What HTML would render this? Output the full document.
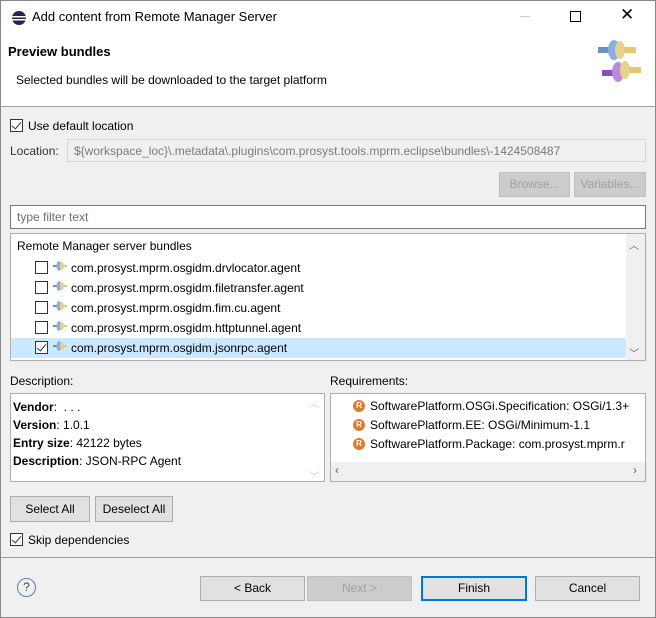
<!DOCTYPE html>
<html><head><meta charset="utf-8"><style>
*{box-sizing:border-box;margin:0;padding:0}
body{width:656px;height:618px;overflow:hidden;font-family:"Liberation Sans",sans-serif;font-size:12px;color:#000;background:#f0f0f0;position:relative}
.abs{position:absolute}
.win{position:absolute;left:0;top:0;width:656px;height:618px;border:1px solid #888;}
.btn{position:absolute;background:#e1e1e1;border:1px solid #adadad;text-align:center;font-size:12px}
.dis{color:#a0a0a0;background:#ccc;border-color:#bfbfbf}
.cb{position:absolute;width:13px;height:13px;border:1px solid #333;background:#fff}
.chk::after{content:"";position:absolute;left:3px;top:0px;width:4px;height:8px;border:solid #333;border-width:0 1px 1px 0;transform:rotate(40deg)}
.t{position:absolute;white-space:nowrap}
</style></head><body>
<div class="abs" style="left:0;top:0;width:656px;height:106px;background:#fff"></div>
<div class="abs" style="left:0;top:106px;width:656px;height:1px;background:#a0a0a0"></div>
<svg class="abs" style="left:11px;top:10px" width="16" height="16"><circle cx="8" cy="8" r="7" fill="#2c2255"/><rect x="1" y="6" width="14" height="1.5" fill="#fff"/><rect x="1" y="9" width="14" height="1.5" fill="#fff"/></svg>
<div class="t" style="left:32px;top:9px;font-size:13px">Add content from Remote Manager Server</div>
<div class="abs" style="left:520px;top:16px;width:10px;height:1px;background:#ccc"></div>
<div class="abs" style="left:570px;top:11px;width:11px;height:11px;border:1px solid #000"></div>
<div class="t" style="left:620px;top:5px;font-size:17px">✕</div>
<div class="t" style="left:8px;top:44px;font-weight:bold;font-size:13px">Preview bundles</div>
<div class="t" style="left:16px;top:73px">Selected bundles will be downloaded to the target platform</div>
<svg class="abs" style="left:596px;top:38px" width="50" height="50">
<rect x="2" y="9" width="12" height="6" fill="#6a8fc9"/><ellipse cx="18" cy="12" rx="6" ry="10" fill="#8aaee0"/><ellipse cx="24" cy="12" rx="5" ry="9" fill="#e8d28a"/><rect x="28" y="9" width="12" height="6" fill="#e4c870"/>
<rect x="6" y="32" width="12" height="6" fill="#8a4fc0"/><ellipse cx="22" cy="34" rx="6" ry="10" fill="#b88ae0"/><ellipse cx="29" cy="32" rx="5" ry="9" fill="#e8d28a"/><rect x="33" y="29" width="12" height="6" fill="#e4c870"/></svg>
<div class="cb chk" style="left:10px;top:119px"></div>
<div class="t" style="left:28px;top:119px">Use default location</div>
<div class="t" style="left:10px;top:144px;color:#333">Location:</div>
<div class="abs" style="left:67px;top:139px;width:579px;height:23px;border:1px solid #d5d5d5;background:#f0f0f0"></div>
<div class="t" style="left:74px;top:144px;color:#7a7a7a">${workspace_loc}\.metadata\.plugins\com.prosyst.tools.mprm.eclipse\bundles\-1424508487</div>
<div class="btn dis" style="left:499px;top:172px;width:71px;height:25px;line-height:23px">Browse...</div>
<div class="btn dis" style="left:574px;top:172px;width:72px;height:25px;line-height:23px">Variables...</div>
<div class="abs" style="left:10px;top:205px;width:636px;height:24px;border:1px solid #7a7a7a;background:#fff"></div>
<div class="t" style="left:17px;top:210px;color:#6d6d6d">type filter text</div>
<div class="abs" style="left:10px;top:233px;width:636px;height:128px;border:1px solid #adadad;background:#fff"></div>
<div class="abs" style="left:626px;top:234px;width:19px;height:126px;background:#f0f0f0"></div>
<div class="t" style="left:629px;top:237px;color:#606060;font-size:10px">︿</div>
<div class="t" style="left:629px;top:345px;color:#606060;font-size:10px">﹀</div>
<div class="abs" style="left:11px;top:338px;width:615px;height:20px;background:#cce8ff"></div>
<div class="t" style="left:17px;top:239px">Remote Manager server bundles</div>
<div id="rows"></div>
<div class="t" style="left:10px;top:374px">Description:</div>
<div class="t" style="left:330px;top:374px">Requirements:</div>
<div class="abs" style="left:10px;top:393px;width:315px;height:89px;border:1px solid #adadad;background:#fff"></div>
<div class="abs" style="left:305px;top:394px;width:19px;height:87px;background:#fff"></div>
<div class="t" style="left:309px;top:395px;color:#ccc;font-size:10px">︿</div>
<div class="t" style="left:309px;top:468px;color:#ccc;font-size:10px">﹀</div>
<div class="t" style="left:13px;top:398px;line-height:18px"><b>Vendor</b>: &nbsp;. . .<br><b>Version</b>: 1.0.1<br><b>Entry size</b>: 42122 bytes<br><b>Description</b>: JSON-RPC Agent</div>
<div class="abs" style="left:330px;top:393px;width:316px;height:89px;border:1px solid #adadad;background:#fff;overflow:hidden">
<div class="abs" style="left:0;top:68px;width:316px;height:20px;background:#f0f0f0"></div>
<div class="t" style="left:4px;top:69px;color:#606060">‹</div><div class="t" style="left:302px;top:69px;color:#606060">›</div>
</div>
<div id="req"></div>
<div class="btn" style="left:10px;top:496px;width:80px;height:26px;line-height:24px">Select All</div>
<div class="btn" style="left:95px;top:496px;width:78px;height:26px;line-height:24px">Deselect All</div>
<div class="cb chk" style="left:10px;top:533px"></div>
<div class="t" style="left:28px;top:533px">Skip dependencies</div>
<div class="abs" style="left:0;top:557px;width:656px;height:1px;background:#a0a0a0"></div>
<div class="abs" style="left:17px;top:578px;width:19px;height:19px;border:1px solid #5a7fb5;border-radius:50%;text-align:center;line-height:17px;color:#444;font-size:12px">?</div>
<div class="btn" style="left:200px;top:576px;width:105px;height:25px;line-height:23px">&lt; Back</div>
<div class="btn dis" style="left:307px;top:576px;width:105px;height:25px;line-height:23px">Next &gt;</div>
<div class="btn" style="left:421px;top:576px;width:106px;height:25px;line-height:21px;border:2px solid #0078d7">Finish</div>
<div class="btn" style="left:535px;top:576px;width:105px;height:25px;line-height:23px">Cancel</div>
<div class="win"></div>
<script>
var n=["drvlocator.agent","filetransfer.agent","fim.cu.agent","httptunnel.agent","jsonrpc.agent"],h="";
n.forEach(function(s,i){var y=261+i*20;h+='<div class="cb'+(i==4?' chk':'')+'" style="left:35px;top:'+y+'px"></div><svg class="abs" style="left:53px;top:'+(y-1)+'px" width="14" height="12"><rect x="0" y="5" width="4" height="2" fill="#6a8fc9"/><ellipse cx="6" cy="6" rx="2.5" ry="5" fill="#8aaee0"/><ellipse cx="9" cy="6" rx="2" ry="4" fill="#e8d28a"/><rect x="10" y="5" width="4" height="2" fill="#e4c870"/></svg><div class="t" style="left:71px;top:'+y+'px">com.prosyst.mprm.osgidm.'+s+'</div>';});
document.getElementById("rows").innerHTML=h;
var r=["SoftwarePlatform.OSGi.Specification: OSGi/1.3+","SoftwarePlatform.EE: OSGi/Minimum-1.1","SoftwarePlatform.Package: com.prosyst.mprm.r"];h="";
r.forEach(function(s,i){var y=399+i*19;h+='<div class="abs" style="left:353px;top:'+(y+1)+'px;width:12px;height:12px;border-radius:50%;background:#e07a30;color:#fff;font-size:8px;font-weight:bold;text-align:center;line-height:12px">R</div><div class="t" style="left:370px;top:'+y+'px;width:275px;overflow:hidden">'+s+'</div>';});
document.getElementById("req").innerHTML=h;
</script>
</body></html>
